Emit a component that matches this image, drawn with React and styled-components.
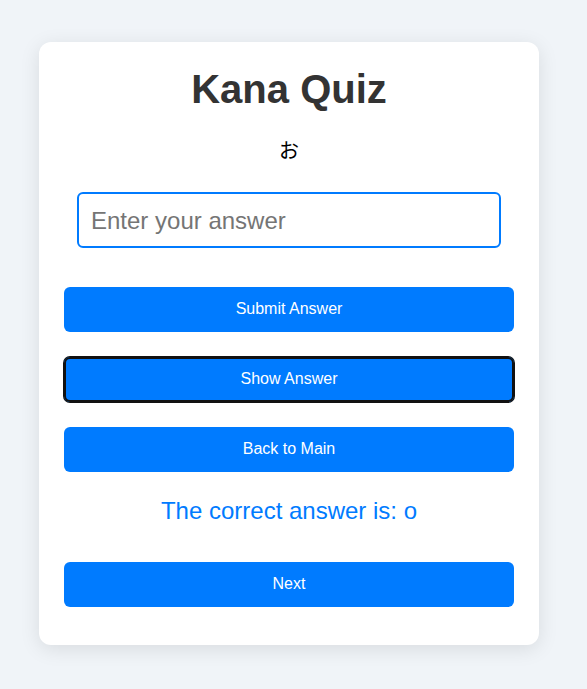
import React from "react";
import styled, { createGlobalStyle } from "styled-components";

const Global = createGlobalStyle`
  html, body { margin: 0; padding: 0; background: #f0f4f8; }
  body { font-family: "Liberation Sans", Arial, sans-serif; }
`;

const Page = styled.div`
  min-height: 689px;
  box-sizing: border-box;
  padding: 42px 0 0 39px;
`;

const Card = styled.div`
  width: 500px;
  box-sizing: border-box;
  background: #fff;
  border-radius: 12px;
  box-shadow: 0 4px 20px rgba(0, 0, 0, 0.1);
  padding: 24px 25px 38px;
  display: flex;
  flex-direction: column;
  align-items: center;
`;

const Title = styled.h1`
  margin: 0;
  font-size: 40px;
  line-height: 46px;
  font-weight: 700;
  color: #333;
`;

const Kana = styled.div`
  margin-top: 26px;
  font-family: "Noto Sans CJK JP", "Liberation Sans", sans-serif;
  font-size: 20px;
  line-height: 24px;
  color: #000;
`;

const Input = styled.input`
  margin-top: 30px;
  width: 424px;
  height: 56px;
  box-sizing: border-box;
  border: 2px solid #007bff;
  border-radius: 6px;
  padding: 1px 12px 0;
  font-family: "Liberation Sans", Arial, sans-serif;
  font-size: 24px;
  color: #333;
  outline: none;
  &::placeholder { color: #757575; }
`;

const Button = styled.button`
  margin-top: ${(p) => p.$gap}px;
  width: 450px;
  height: 45px;
  padding: 0 0 2px;
  border: none;
  border-radius: 6px;
  background: #007bff;
  color: #fff;
  font-family: "Liberation Sans", Arial, sans-serif;
  font-size: 16px;
  cursor: pointer;
  box-shadow: ${(p) => (p.$focused ? "0 0 0 1px #111, inset 0 0 0 2px #111" : "none")};
`;

const Result = styled.div`
  margin-top: 25px;
  font-size: 24px;
  line-height: 28px;
  color: #007bff;
`;

export default function App() {
  return (
    <>
      <Global />
      <Page>
        <Card>
          <Title>Kana Quiz</Title>
          <Kana>お</Kana>
          <Input placeholder="Enter your answer" />
          <Button $gap={39}>Submit Answer</Button>
          <Button $gap={25} $focused>Show Answer</Button>
          <Button $gap={25}>Back to Main</Button>
          <Result>The correct answer is: o</Result>
          <Button $gap={37}>Next</Button>
        </Card>
      </Page>
    </>
  );
}
